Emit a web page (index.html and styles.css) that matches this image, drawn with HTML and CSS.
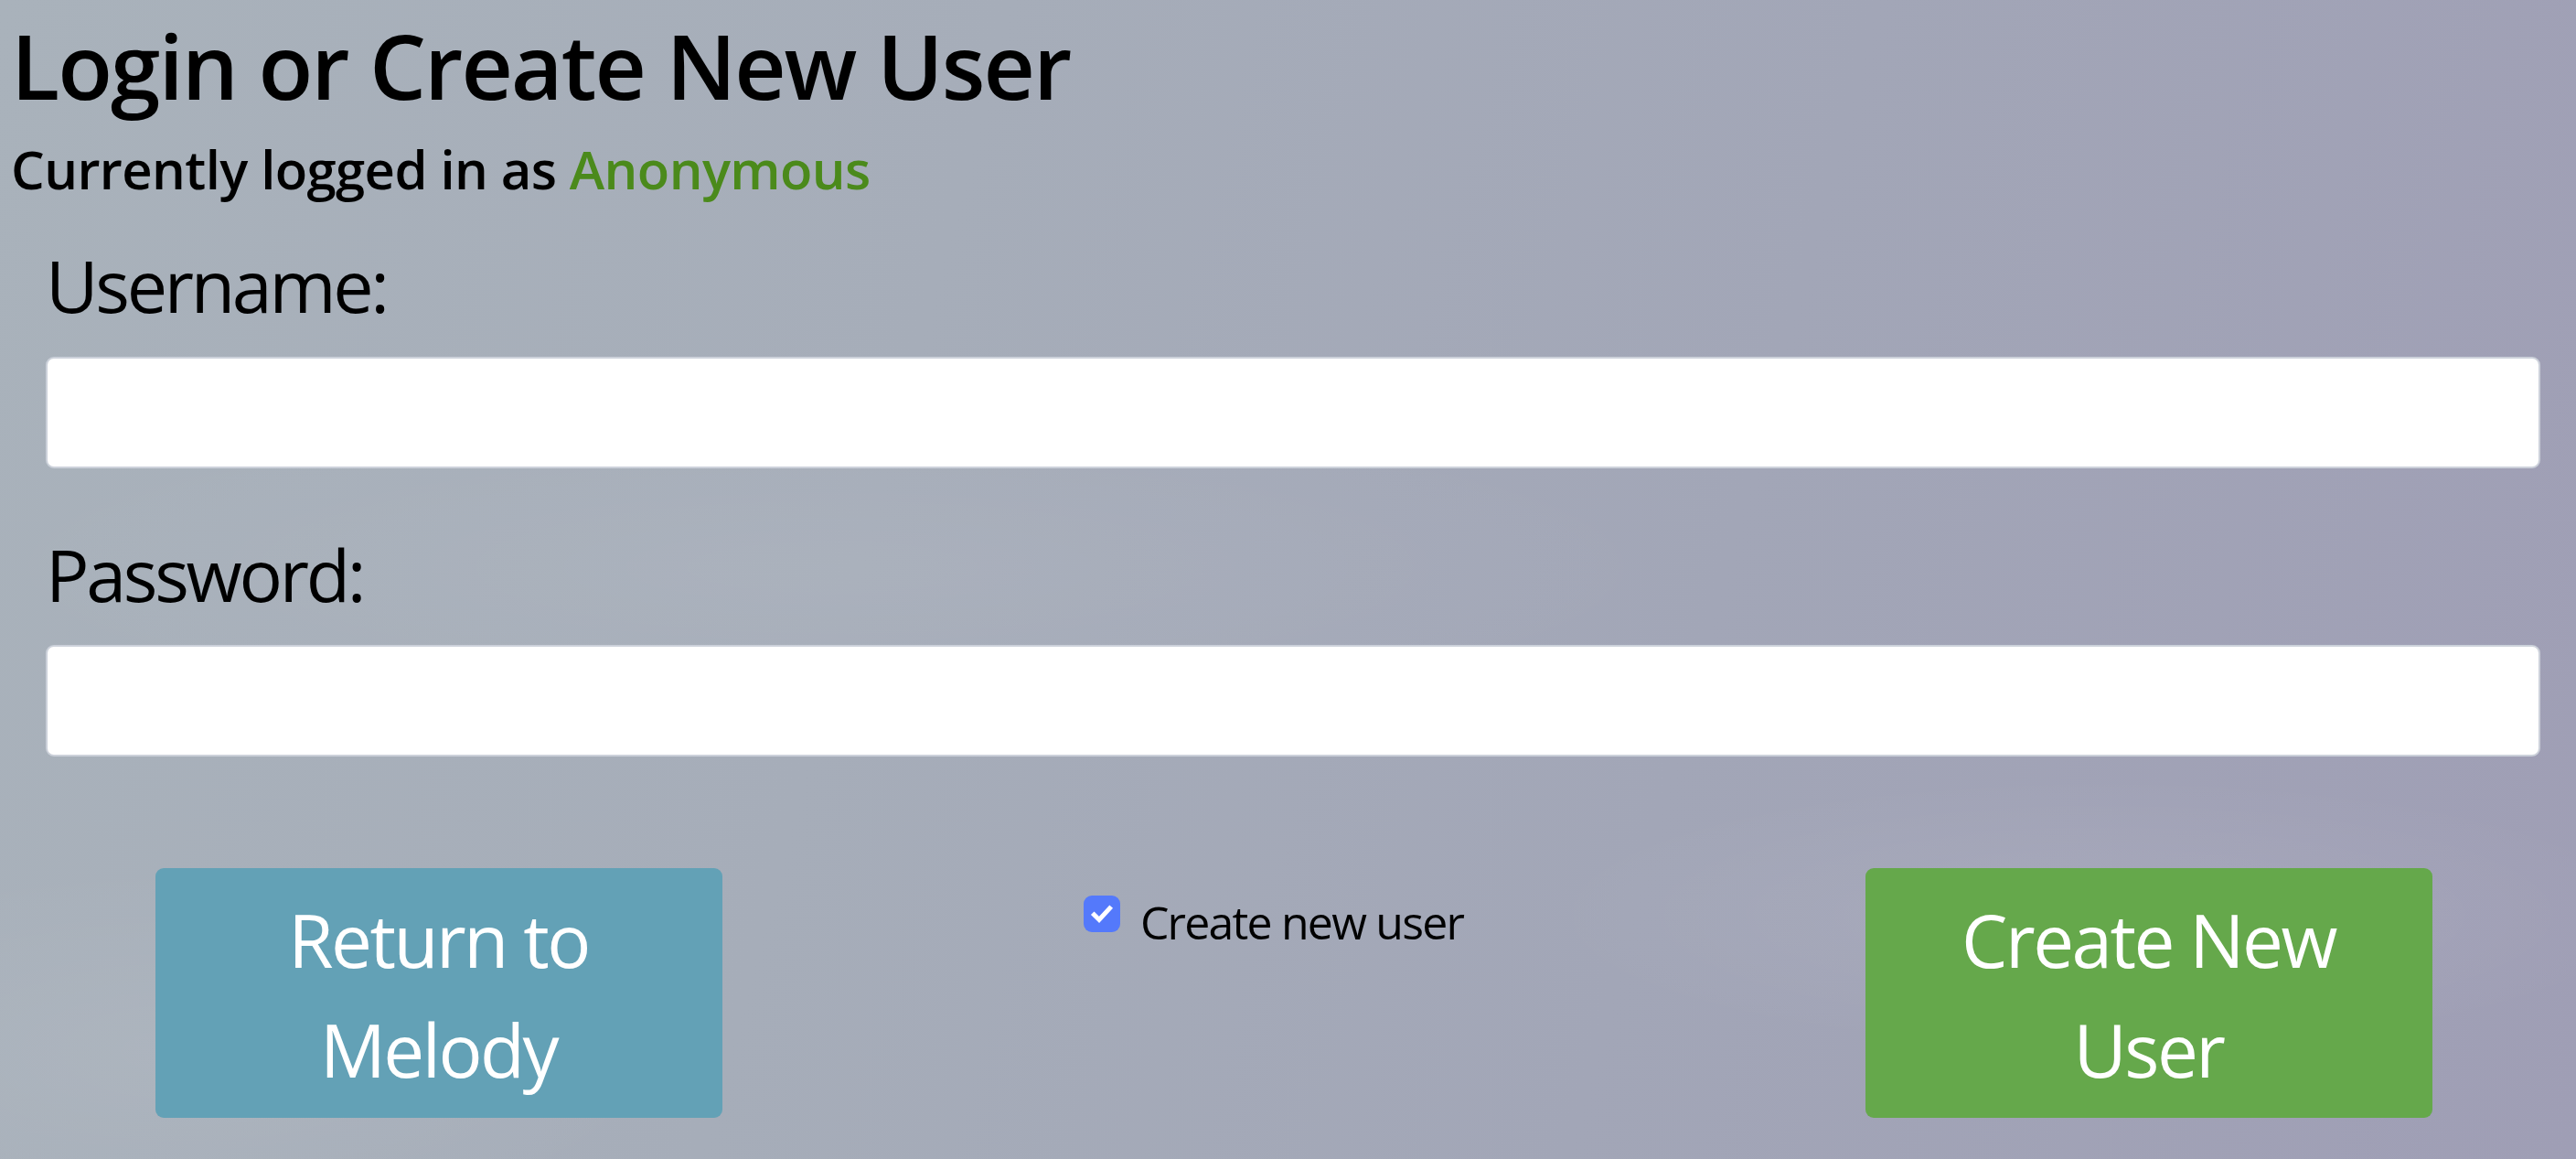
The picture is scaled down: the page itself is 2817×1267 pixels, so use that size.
FILE: index.html
```html
<!DOCTYPE html>
<html lang="en">
<head>
<meta charset="utf-8">
<title>Login or Create New User</title>
<link rel="stylesheet" href="styles.css">
</head>
<body>
<div class="page">
  <header class="head">
    <h1 class="title">Login or Create New User</h1>
    <p class="status">Currently logged in as <span class="anon">Anonymous</span></p>
  </header>
  <form class="form">
    <div class="field">
      <label class="label" for="username">Username:</label>
      <input class="input" id="username" type="text">
    </div>
    <div class="field field-second">
      <label class="label" for="password">Password:</label>
      <input class="input" id="password" type="password">
    </div>
  </form>
  <div class="actions">
    <button class="btn btn-return" type="button">Return to<br>Melody</button>
    <label class="toggle">
      <span class="check"><svg viewBox="0 0 40 40" width="40" height="40"><path d="M11.5 21 L17 26.5 L28.5 14" fill="none" stroke="#fff" stroke-width="5" stroke-linecap="square" stroke-linejoin="miter"/></svg></span>
      <span class="toggle-text">Create new user</span>
    </label>
    <button class="btn btn-create" type="button">Create New<br>User</button>
  </div>
</div>
</body>
</html>
```
FILE: styles.css
```css
html, body {
  margin: 0;
  padding: 0;
}
body {
  width: 2817px;
  height: 1267px;
  overflow: hidden;
  font-family: "Open Sans", "Noto Sans", "Liberation Sans", sans-serif;
  color: #000;
  background:
    radial-gradient(ellipse 900px 220px at 2300px 1000px, rgba(255,255,255,0.07), rgba(255,255,255,0) 70%),
    radial-gradient(ellipse 1400px 260px at 900px 620px, rgba(255,255,255,0.05), rgba(255,255,255,0) 70%),
    radial-gradient(ellipse 800px 300px at 200px 1150px, rgba(255,255,255,0.06), rgba(255,255,255,0) 70%),
    linear-gradient(105deg, #a9b2bb 0%, #a6adb9 35%, #a2a6b7 65%, #9f9eb5 100%);
}
.page {
  display: flex;
  flex-direction: column;
}
.head {
  padding: 22px 0 0 12px;
}
.title {
  margin: 0;
  font-size: 98px;
  line-height: 1;
  font-weight: 600;
  letter-spacing: -2px;
}
.status {
  margin: 36px 0 0 0;
  font-size: 58px;
  line-height: 1;
  font-weight: 600;
  letter-spacing: -0.6px;
}
.anon {
  color: #4b8a1b;
}
.form {
  display: flex;
  flex-direction: column;
  padding: 58px 39px 0 50px;
}
.field {
  display: flex;
  flex-direction: column;
}
.field-second {
  margin-top: 76px;
}
.label {
  font-size: 79px;
  line-height: 1;
  font-weight: 400;
  letter-spacing: -3.3px;
}
.input {
  margin: 39px 0 0 0;
  height: 122px;
  box-sizing: border-box;
  background: #fff;
  border: 2px solid #ccd1da;
  border-radius: 9px;
  padding: 0 20px;
  font-size: 60px;
  font-family: inherit;
  outline: none;
}
.field-second .input {
  margin-top: 38px;
}
.actions {
  display: grid;
  grid-template-columns: repeat(3, 1fr);
  padding: 122px 0 0 12px;
  align-items: start;
}
.btn {
  justify-self: center;
  width: 620px;
  height: 273px;
  box-sizing: border-box;
  border: none;
  border-radius: 9px;
  color: #fff;
  font-family: inherit;
  font-size: 80px;
  line-height: 120px;
  font-weight: 400;
  padding: 2px 0 0 0;
  text-align: center;
  letter-spacing: -2.5px;
}
.btn-return {
  background: #63a1b6;
}
.btn-create {
  background: #65a84b;
}
.toggle {
  justify-self: center;
  margin-right: 44px;
  display: flex;
  align-items: flex-start;
  gap: 22px;
}
.check {
  margin-top: 30px;
  width: 40px;
  height: 40px;
  border-radius: 9px;
  background: #5479fb;
  display: block;
}
.check svg {
  display: block;
}
.toggle-text {
  margin-top: 34px;
  font-size: 50px;
  line-height: 1;
  letter-spacing: -1.8px;
}
```
